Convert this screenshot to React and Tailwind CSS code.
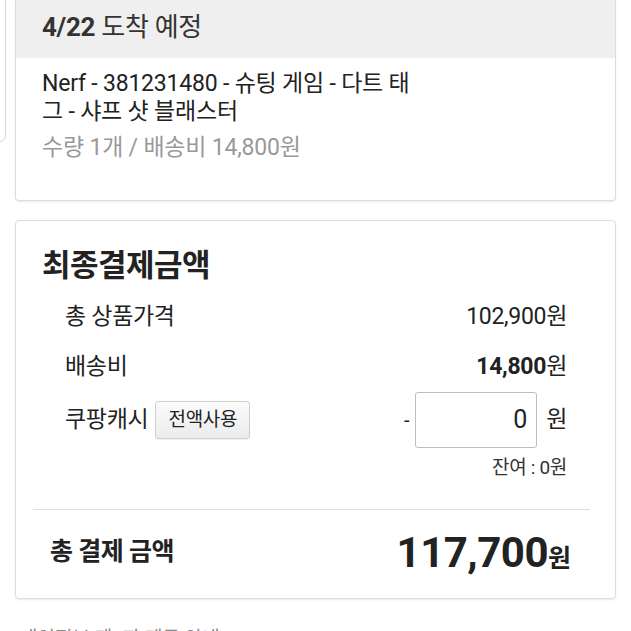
import React from "react";

const font = { fontFamily: "Roboto, 'Noto Sans CJK KR', sans-serif" };

const App = () => {
  return (
    <div className="relative w-[631px] h-[631px] overflow-hidden bg-white text-[#222]" style={font}>
      {/* sheet behind, peeking on the left */}
      <div className="absolute left-[-20px] top-[-10px] w-[26px] h-[152px] border border-[#d6d6d6] rounded-br-[6px] bg-white" />

      <div className="px-[15px]">
        {/* delivery card */}
        <div className="border border-t-0 border-[#dcdcdc] rounded-b-[4px] shadow-[0_1px_2px_rgba(0,0,0,0.08)] h-[201px] overflow-hidden">
          <div className="bg-[#efefef] h-[58px] flex items-center pl-[26px] pb-[4px]">
            <span className="text-[26px] text-[#333] tracking-[-0.3px]">
              <span className="font-bold">4/22</span> 도착 예정
            </span>
          </div>
          <div className="pl-[26px] pt-[12px]">
            <p className="text-[23px] leading-[28px] text-[#222] tracking-[-0.2px]">
              Nerf - 381231480 - 슈팅 게임 - 다트 태
              <br />그 - 샤프 샷 블래스터
            </p>
            <p className="mt-[8px] text-[23px] leading-[28px] text-[#999] tracking-[-0.2px]">수량 1개 / 배송비 14,800원</p>
          </div>
        </div>

        {/* payment card */}
        <div className="mt-[19px] border border-[#dcdcdc] rounded-[4px] shadow-[0_1px_2px_rgba(0,0,0,0.08)] h-[379px] pl-[17px] pr-[25px] pt-[27px]">
          <h2 className="pl-[9px] text-[31px] leading-[36px] font-bold text-[#222] tracking-[-0.5px]">최종결제금액</h2>

          <div className="mt-[8px] pl-[32px] pr-[23px] text-[23px] tracking-[-0.3px]">
            <div className="h-[50px] flex items-center justify-between">
              <span>총 상품가격</span>
              <span>102,900원</span>
            </div>
            <div className="h-[50px] flex items-center justify-between">
              <span>배송비</span>
              <span>
                <span className="font-bold">14,800</span>원
              </span>
            </div>
            <div className="h-[56px] flex items-center justify-between">
              <div className="flex items-center gap-[7px]">
                <span>쿠팡캐시</span>
                <button className="h-[38px] px-[12px] text-[19px] border border-[#cfcfcf] rounded-[3px] bg-gradient-to-b from-[#fbfbfb] to-[#ececec] shadow-[0_1px_1px_rgba(0,0,0,0.06)]">
                  전액사용
                </button>
              </div>
              <div className="flex items-center">
                <span className="mr-[6px] text-[20px]">-</span>
                <div className="w-[122px] h-[56px] border border-[#bdbdbd] rounded-[3px] flex items-center justify-end pr-[9px] text-[25px]">
                  0
                </div>
                <span className="ml-[9px] text-[23px]">원</span>
              </div>
            </div>
            <div className="h-[34px] flex items-end justify-end text-[19px] text-[#333]">잔여 : 0원</div>
          </div>

          <div className="mt-[27px] border-t border-[#dedede]" />

          <div className="h-[84px] pl-[17px] pr-[19px] flex items-center justify-between">
            <span className="text-[25px] font-bold tracking-[-0.5px]">총 결제 금액</span>
            <span className="flex items-baseline">
              <span className="text-[42px] font-bold tracking-[-0.5px]">117,700</span>
              <span className="text-[25px] font-bold">원</span>
            </span>
          </div>
        </div>

        <div className="mt-[28px] flex justify-between pl-[5px] pr-[10px] text-[19px] leading-[24px] text-[#888]">
          <span>개인정보 제3자 제공 안내</span>
          <span>˅</span>
        </div>
      </div>
    </div>
  );
};

export default App;
